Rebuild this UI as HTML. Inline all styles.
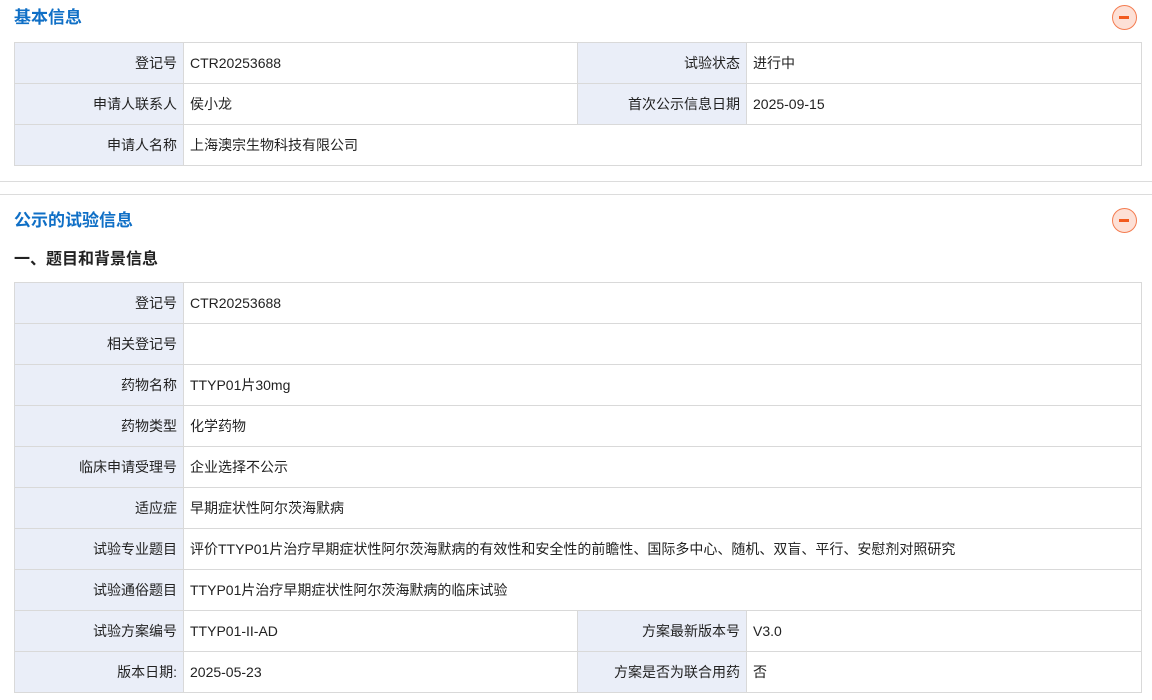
<!DOCTYPE html>
<html><head><meta charset="utf-8"><style>
body{margin:0;background:#fff;font-family:"Liberation Sans","Noto Sans CJK SC",sans-serif;color:#222;width:1152px;height:700px;overflow:hidden;position:relative}
.t{position:absolute;left:14px;font-size:17px;font-weight:bold;color:#0f6fc6}
.h{position:absolute;left:14px;font-size:16px;font-weight:bold;color:#222}
.ic{position:absolute;left:1112px;width:25px;height:25px;border:1.5px solid #f47c50;border-radius:50%;background:#fde0d6;box-sizing:border-box}
.ic:after{content:"";position:absolute;left:6px;top:9.5px;width:10px;height:3px;background:#f25a1e}
table{position:absolute;left:14px;width:1128px;border-collapse:collapse;font-size:14px}
td{border:1px solid #d9d9d9;height:41px;padding:0 6px;box-sizing:border-box}
td.l{background:#eaeef8;text-align:right;width:169px}
td.l2{background:#eaeef8;text-align:right;width:169px}
.line{position:absolute;left:0;width:1152px;height:1px;background:#dcdcdc}
</style></head><body>
<div class="t" style="top:3px">基本信息</div>
<div class="ic" style="top:5px"></div>
<table style="top:42px">
<tr><td class="l">登记号</td><td style="width:394px">CTR20253688</td><td class="l2">试验状态</td><td>进行中</td></tr>
<tr><td class="l">申请人联系人</td><td>侯小龙</td><td class="l2">首次公示信息日期</td><td>2025-09-15</td></tr>
<tr><td class="l">申请人名称</td><td colspan="3">上海澳宗生物科技有限公司</td></tr>
</table>
<div class="line" style="top:181px"></div>
<div class="line" style="top:194px"></div>
<div class="t" style="top:206px">公示的试验信息</div>
<div class="ic" style="top:208px"></div>
<div class="h" style="top:245px">一、题目和背景信息</div>
<table style="top:282px">
<tr><td class="l">登记号</td><td colspan="3">CTR20253688</td></tr>
<tr><td class="l">相关登记号</td><td colspan="3"></td></tr>
<tr><td class="l">药物名称</td><td colspan="3">TTYP01片30mg</td></tr>
<tr><td class="l">药物类型</td><td colspan="3">化学药物</td></tr>
<tr><td class="l">临床申请受理号</td><td colspan="3">企业选择不公示</td></tr>
<tr><td class="l">适应症</td><td colspan="3">早期症状性阿尔茨海默病</td></tr>
<tr><td class="l">试验专业题目</td><td colspan="3">评价TTYP01片治疗早期症状性阿尔茨海默病的有效性和安全性的前瞻性、国际多中心、随机、双盲、平行、安慰剂对照研究</td></tr>
<tr><td class="l">试验通俗题目</td><td colspan="3">TTYP01片治疗早期症状性阿尔茨海默病的临床试验</td></tr>
<tr><td class="l">试验方案编号</td><td style="width:394px">TTYP01-II-AD</td><td class="l2">方案最新版本号</td><td>V3.0</td></tr>
<tr><td class="l">版本日期:</td><td>2025-05-23</td><td class="l2">方案是否为联合用药</td><td>否</td></tr>
</table>
</body></html>
